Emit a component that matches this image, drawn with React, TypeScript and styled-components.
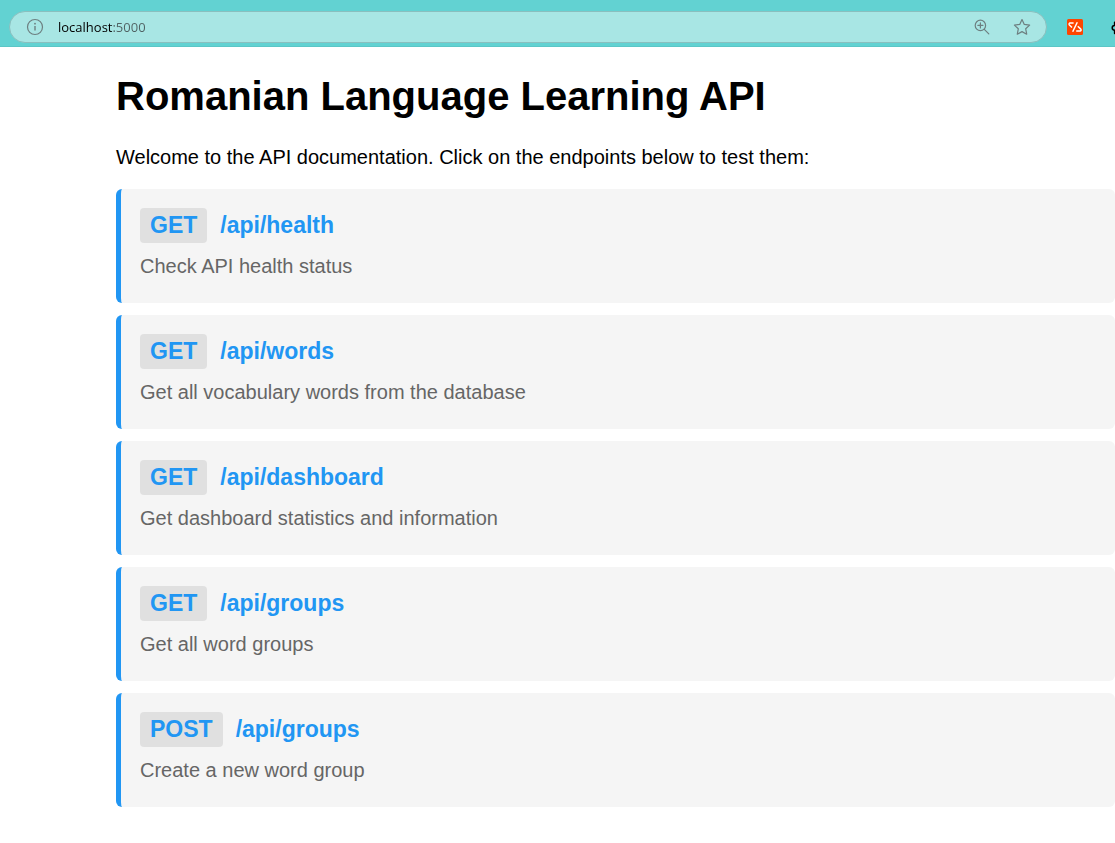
import React from 'react';
import styled, { createGlobalStyle } from 'styled-components';

const GlobalStyle = createGlobalStyle`
  *, *::before, *::after { box-sizing: border-box; }
  body {
    margin: 0;
    background: #ffffff;
    color: #000000;
    font-family: Arial, "Liberation Sans", sans-serif;
    font-size: 20px;
    line-height: 24px;
  }
`;

const Toolbar = styled.header`
  display: flex;
  align-items: center;
  height: 47px;
  padding: 7px 0 0 9px;
  overflow: hidden;
  background: #62d2d2;
  border-bottom: 1px solid #5cc6c6;
`;

const AddressBar = styled.div`
  display: flex;
  align-items: center;
  flex: 1;
  min-width: 0;
  height: 32px;
  padding: 0 15px 0 16px;
  background: #a8e6e4;
  border: 1px solid #8abfbe;
  border-radius: 16px;
`;

const IconButton = styled.button`
  display: flex;
  flex: none;
  padding: 0;
  border: 0;
  background: none;
  color: #6d7f80;
  cursor: pointer;
`;

/* The host is drawn in black and the port in grey, as one editable text. */
const AddressInput = styled.input`
  flex: 1;
  min-width: 0;
  height: 20px;
  margin: 0 14px;
  padding: 0;
  border: 0;
  outline: 0;
  font-family: "Segoe UI", "Open Sans", sans-serif;
  font-size: 13px;
  line-height: 20px;
  color: #000000;
  background: linear-gradient(to right, #000000 55px, #4f6162 55px);
  background-clip: text;
  -webkit-background-clip: text;
  -webkit-text-fill-color: transparent;
`;

const BarActions = styled.div`
  display: flex;
  align-items: center;
  gap: 22px;
`;

const Extensions = styled.div`
  display: flex;
  flex: none;
  align-items: center;
  gap: 28px;
  width: 68px;
  padding-left: 20px;
`;

const Page = styled.main`
  padding: 26px 0 36px 116px;
`;

const Title = styled.h1`
  margin: 0;
  font-size: 40px;
  line-height: 46px;
`;

const Intro = styled.p`
  margin: 26px 0 20px;
`;

const EndpointList = styled.div`
  display: grid;
  gap: 12px;
`;

const Endpoint = styled.article`
  padding: 19px 19px 25px;
  background: #f5f5f5;
  border-left: 5px solid #2196f3;
  border-radius: 6px;
`;

const EndpointHeading = styled.h3`
  margin: 0;
  font-size: 23px;
  line-height: 35px;
`;

const EndpointLink = styled.a`
  display: inline-flex;
  gap: 13px;
  vertical-align: top;
  color: #2196f3;
  text-decoration: none;
`;

const Method = styled.span`
  padding: 0 10px;
  background: #e0e0e0;
  border-radius: 4px;
`;

const Description = styled.p`
  margin: 11px 0 0;
  color: #666666;
`;

const endpoints = [
  { method: 'GET', path: '/api/health', text: 'Check API health status' },
  { method: 'GET', path: '/api/words', text: 'Get all vocabulary words from the database' },
  { method: 'GET', path: '/api/dashboard', text: 'Get dashboard statistics and information' },
  { method: 'GET', path: '/api/groups', text: 'Get all word groups' },
  { method: 'POST', path: '/api/groups', text: 'Create a new word group' },
];

const InfoIcon = () => (
  <svg width="18" height="18" viewBox="0 0 18 18" fill="none" stroke="currentColor" strokeWidth="1.2">
    <circle cx="9" cy="9" r="7.5" />
    <path d="M9 8v4.6" strokeWidth="1.4" />
    <circle cx="9" cy="5.7" r=".9" fill="currentColor" stroke="none" />
  </svg>
);

const ZoomIcon = () => (
  <svg width="18" height="18" viewBox="0 0 18 18" fill="none" stroke="currentColor" strokeWidth="1.2" strokeLinecap="round">
    <circle cx="7.4" cy="7.4" r="5.2" />
    <path d="M11.3 11.3l4.5 4.5M7.4 4.9v5M4.9 7.4h5" />
  </svg>
);

const StarIcon = () => (
  <svg width="18" height="18" viewBox="0 0 18 18" fill="none" stroke="currentColor" strokeWidth="1.2" strokeLinejoin="round">
    <path d="M9 1.5l2.3 4.9 5.3.7-3.9 3.7 1 5.4L9 13.6l-4.7 2.6 1-5.4L1.4 7.1l5.3-.7z" />
  </svg>
);

const CodeIcon = () => (
  <svg width="16" height="16" viewBox="0 0 16 16" fill="none" stroke="#fff" strokeWidth="1.5" strokeLinejoin="round">
    <rect width="16" height="16" rx="1.5" fill="#ff4500" stroke="none" />
    <path d="M6.6 3.9H2.9Q1.5 4.8 2.4 6L5 8.5M10.3 3.2L5.7 12.8M10.8 7.2l3 2.9q.9 1.3-.6 2H9.2" />
  </svg>
);

const PuzzleIcon = () => (
  <svg width="18" height="18" viewBox="0 0 18 18" fill="none" stroke="#000" strokeWidth="1.5" strokeLinejoin="round">
    <path d="M3.6 4.2h3.8a2 2 0 1 1 3.6 0h4v3.6a2 2 0 1 1 0 3.6v4H3.6v-3.2a2.4 2.4 0 0 1 0-4.8z" />
  </svg>
);

export default function App() {
  return (
    <>
      <GlobalStyle />
      <Toolbar>
        <AddressBar>
          <IconButton type="button" aria-label="Site information"><InfoIcon /></IconButton>
          <AddressInput type="text" aria-label="Address" defaultValue="localhost:5000" spellCheck={false} />
          <BarActions>
            <IconButton type="button" aria-label="Zoom"><ZoomIcon /></IconButton>
            <IconButton type="button" aria-label="Add to favorites"><StarIcon /></IconButton>
          </BarActions>
        </AddressBar>
        <Extensions>
          <IconButton type="button" aria-label="Code extension"><CodeIcon /></IconButton>
          <IconButton type="button" aria-label="Extensions"><PuzzleIcon /></IconButton>
        </Extensions>
      </Toolbar>
      <Page>
        <Title>Romanian Language Learning API</Title>
        <Intro>Welcome to the API documentation. Click on the endpoints below to test them:</Intro>
        <EndpointList>
          {endpoints.map(({ method, path, text }) => (
            <Endpoint key={method + path}>
              <EndpointHeading>
                <EndpointLink href={path}>
                  <Method>{method}</Method>
                  <span>{path}</span>
                </EndpointLink>
              </EndpointHeading>
              <Description>{text}</Description>
            </Endpoint>
          ))}
        </EndpointList>
      </Page>
    </>
  );
}
